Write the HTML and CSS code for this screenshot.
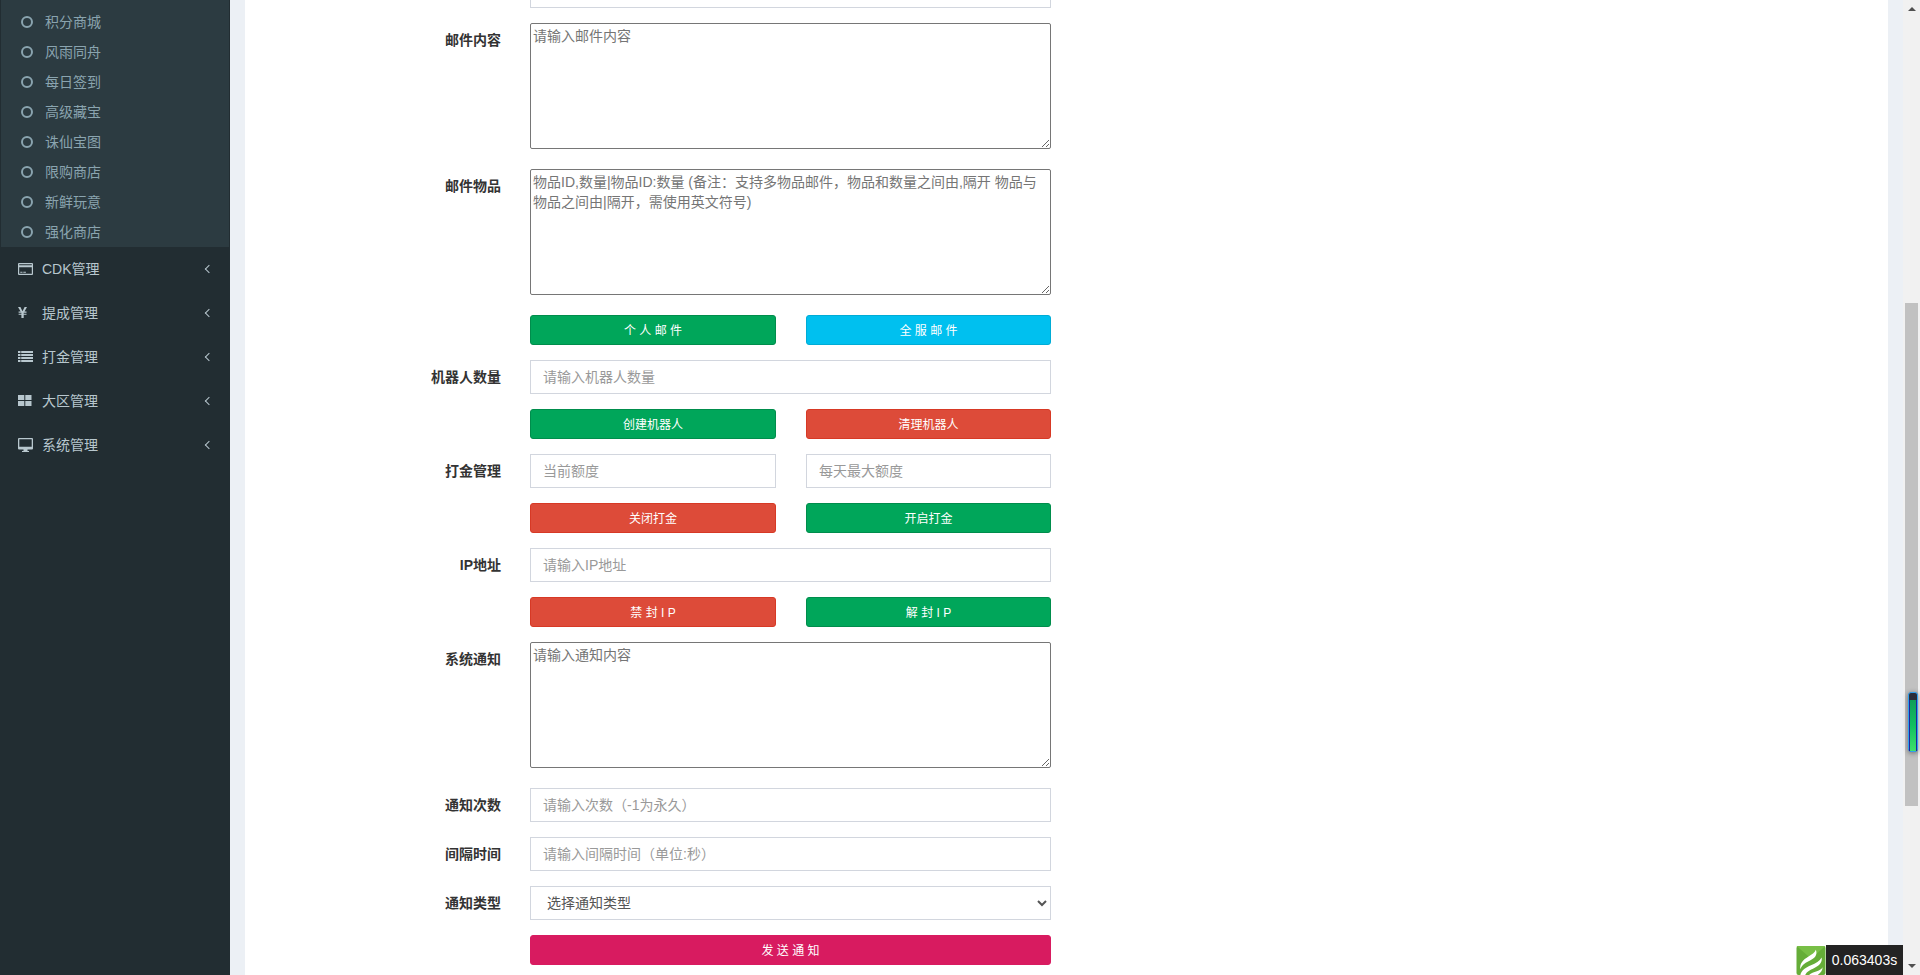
FILE: index.html
```html
<!DOCTYPE html>
<html lang="zh-CN">
<head>
    <meta charset="UTF-8">
    <title>后台管理</title>
    <link rel="stylesheet" href="styles.css">
</head>
<body>
    <div class="wrapper">
        <aside class="sidebar">
            <ul class="treeview-menu">
                <li><i class="circle-o"></i>积分商城</li>
                <li><i class="circle-o"></i>风雨同舟</li>
                <li><i class="circle-o"></i>每日签到</li>
                <li><i class="circle-o"></i>高级藏宝</li>
                <li><i class="circle-o"></i>诛仙宝图</li>
                <li><i class="circle-o"></i>限购商店</li>
                <li><i class="circle-o"></i>新鲜玩意</li>
                <li><i class="circle-o"></i>强化商店</li>
            </ul>
            <ul class="sidebar-menu">
                <li>
                    <svg class="menu-icon" viewBox="0 0 16 16"><path fill="currentColor" fill-rule="evenodd" d="M1 2h13a1 1 0 0 1 1 1v10a1 1 0 0 1-1 1H1a1 1 0 0 1-1-1V3a1 1 0 0 1 1-1zM1.200 3.200v1h12.600v-1zM1.200 6.200v6.600h12.600V6.200zM2.300 10.800h2.200v1H2.300zM5.300 10.800h2.600v1H5.300z"/></svg>
                    <span>CDK管理</span><i class="chevron"></i>
                </li>
                <li>
                    <svg class="menu-icon" viewBox="0 0 16 16"><path fill="currentColor" d="M0 2h2.400l2.100 4.200L6.600 2H9L6.500 6.600h2v1.100H5.700v1h2.800v1.100H5.700V13H3.400v-3.200H.6V8.700h2.800v-1H.6V6.600h2L0 2z"/></svg>
                    <span>提成管理</span><i class="chevron"></i>
                </li>
                <li>
                    <svg class="menu-icon" viewBox="0 0 16 16"><path fill="currentColor" d="M0 2h2.500v2H0zM3.200 2H15v2H3.200zM0 5h2.500v2H0zM3.200 5H15v2H3.200zM0 8h2.500v2H0zM3.200 8H15v2H3.200zM0 11h2.500v2H0zM3.200 11H15v2H3.200z"/></svg>
                    <span>打金管理</span><i class="chevron"></i>
                </li>
                <li>
                    <svg class="menu-icon" viewBox="0 0 16 16"><path fill="currentColor" d="M0 2h6.300v5H0zM7.300 2h6.200v5H7.300zM0 8h6.300v5H0zM7.300 8h6.200v5H7.300z"/></svg>
                    <span>大区管理</span><i class="chevron"></i>
                </li>
                <li>
                    <svg class="menu-icon" viewBox="0 0 16 16"><path fill="currentColor" fill-rule="evenodd" d="M1 1h13a1 1 0 0 1 1 1v9.500a1 1 0 0 1-1 1H9.500V14H11v1H4v-1h1.500v-1.500H1a1 1 0 0 1-1-1V2a1 1 0 0 1 1-1zM1.300 2.300v7.500h12.400V2.300z"/></svg>
                    <span>系统管理</span><i class="chevron"></i>
                </li>
            </ul>
        </aside>

        <main class="content">
            <form class="box">
                <div class="form-group">
                    <label></label>
                    <input type="text">
                </div>
                <div class="form-group area-group">
                    <label>邮件内容</label>
                    <textarea placeholder="请输入邮件内容"></textarea>
                </div>
                <div class="form-group area-group">
                    <label>邮件物品</label>
                    <textarea placeholder="物品ID,数量|物品ID:数量 (备注：支持多物品邮件，物品和数量之间由,隔开 物品与物品之间由|隔开，需使用英文符号)"></textarea>
                </div>
                <div class="form-group btn-group">
                    <label></label>
                    <div class="two-col">
                        <button type="button" class="btn btn-success">个 人 邮 件</button>
                        <button type="button" class="btn btn-info">全 服 邮 件</button>
                    </div>
                </div>
                <div class="form-group">
                    <label>机器人数量</label>
                    <input type="text" placeholder="请输入机器人数量">
                </div>
                <div class="form-group btn-group">
                    <label></label>
                    <div class="two-col">
                        <button type="button" class="btn btn-success">创建机器人</button>
                        <button type="button" class="btn btn-danger">清理机器人</button>
                    </div>
                </div>
                <div class="form-group">
                    <label>打金管理</label>
                    <div class="two-col">
                        <input type="text" placeholder="当前额度">
                        <input type="text" placeholder="每天最大额度">
                    </div>
                </div>
                <div class="form-group btn-group">
                    <label></label>
                    <div class="two-col">
                        <button type="button" class="btn btn-danger">关闭打金</button>
                        <button type="button" class="btn btn-success">开启打金</button>
                    </div>
                </div>
                <div class="form-group">
                    <label>IP地址</label>
                    <input type="text" placeholder="请输入IP地址">
                </div>
                <div class="form-group btn-group">
                    <label></label>
                    <div class="two-col">
                        <button type="button" class="btn btn-danger">禁 封 I P</button>
                        <button type="button" class="btn btn-success">解 封 I P</button>
                    </div>
                </div>
                <div class="form-group area-group">
                    <label>系统通知</label>
                    <textarea placeholder="请输入通知内容"></textarea>
                </div>
                <div class="form-group">
                    <label>通知次数</label>
                    <input type="text" placeholder="请输入次数（-1为永久）">
                </div>
                <div class="form-group">
                    <label>间隔时间</label>
                    <input type="text" placeholder="请输入间隔时间（单位:秒）">
                </div>
                <div class="form-group">
                    <label>通知类型</label>
                    <select>
                        <option>选择通知类型</option>
                    </select>
                </div>
                <div class="form-group btn-group">
                    <label></label>
                    <button type="button" class="btn btn-pink">发 送 通 知</button>
                </div>
            </form>
        </main>

        <div class="scrollbar">
            <div class="arrow arrow-up"></div>
            <div class="thumb"></div>
            <div class="arrow arrow-down"></div>
        </div>
    </div>

    <div class="scroll-widget"><div class="scroll-widget-bar"></div></div>

    <div class="trace">
        <svg class="trace-logo" viewBox="0 0 30 30">
            <rect width="30" height="30" rx="2" fill="#65ad38"/>
            <path fill="#78bf46" d="M0 0h30L15 13z"/>
            <path fill="#fff" d="M20 4c2 5-1 9-6 11-4 2-8 4-10 9-1-6 3-10 8-13 4-2 7-4 8-7z"/>
            <path fill="#fff" d="M26 12c1 5-3 9-8 11-4 2-7 3-9 7H4c1-5 6-8 11-10 5-2 9-4 11-8z"/>
            <path fill="#fff" d="M27 22c0 3-2 6-5 8h-9c2-2 5-3 8-4 3-1 5-2 6-4z"/>
        </svg>
        <div class="trace-time">0.063403s</div>
    </div>
</body>
</html>
```

FILE: styles.css
```css
* {
    box-sizing: border-box;
    margin: 0;
    padding: 0;
}

html, body {
    height: 975px;
    overflow: hidden;
}

body {
    font-family: "Liberation Sans", "Noto Sans CJK SC", sans-serif;
    font-size: 14px;
    color: #333333;
    background-color: #ecf0f5;
}

ul {
    list-style: none;
}

.wrapper {
    display: flex;
    height: 975px;
}

/* sidebar */
.sidebar {
    width: 230px;
    flex-shrink: 0;
    background-color: #222d32;
}

.treeview-menu {
    margin: 0 1px;
    padding: 7px 0 0;
    background-color: #2c3b41;
    color: #8aa4af;
}

.treeview-menu li {
    display: flex;
    align-items: center;
    height: 30px;
    padding: 0 0 2px 20px;
}

.circle-o {
    width: 12px;
    height: 12px;
    margin: 2px 12px 0 0;
    border: 2px solid #8aa4af;
    border-radius: 50%;
}

.sidebar-menu {
    color: #b8c7ce;
}

.sidebar-menu li {
    display: flex;
    align-items: center;
    height: 44px;
    padding: 0 17px 0 18px;
}

.menu-icon {
    width: 16px;
    height: 16px;
    margin-right: 8px;
    flex-shrink: 0;
}

.sidebar-menu span {
    flex: 1;
    margin-top: -2px;
}

.chevron {
    width: 6px;
    height: 6px;
    margin-right: 1px;
    border-left: 1.500px solid #b8c7ce;
    border-bottom: 1.500px solid #b8c7ce;
    transform: rotate(45deg);
}

/* main */
.content {
    flex: 1;
    padding: 0 15px;
    overflow: hidden;
}

.box {
    height: 975px;
    overflow: hidden;
    background-color: #ffffff;
}

.form-group {
    display: grid;
    grid-template-columns: 256px 521px;
    column-gap: 29px;
    margin-bottom: 15px;
}

.form-group:first-child {
    margin-top: -26px;
}

.form-group label {
    padding-top: 7px;
    font-weight: bold;
    text-align: right;
    line-height: 20px;
}

.area-group {
    margin-bottom: 20px;
}

.two-col {
    display: grid;
    grid-template-columns: 246px 245px;
    column-gap: 30px;
}

input, select {
    width: 100%;
    height: 34px;
    padding: 6px 12px;
    border: 1px solid #d2d6de;
    background-color: #ffffff;
    color: #555555;
    font: inherit;
    outline: none;
}

input::placeholder {
    color: #999999;
}

textarea {
    display: block;
    width: 100%;
    height: 126px;
    padding: 2px;
    border: 1px solid #767676;
    border-radius: 2px;
    font: inherit;
    line-height: 20px;
    outline: none;
}

textarea::placeholder {
    color: #757575;
}

.btn {
    display: block;
    width: 100%;
    height: 30px;
    padding-bottom: 2px;
    border: 1px solid transparent;
    border-radius: 3px;
    color: #ffffff;
    font: inherit;
    font-size: 12px;
    cursor: pointer;
}

.btn-success {
    background-color: #00a65a;
    border-color: #008d4c;
}

.btn-info {
    background-color: #00c0ef;
    border-color: #00acd6;
}

.btn-danger {
    background-color: #dd4b39;
    border-color: #d73925;
}

.btn-pink {
    background-color: #d81b60;
    border-color: #d81b60;
}

/* page scrollbar */
.scrollbar {
    width: 17px;
    flex-shrink: 0;
    display: flex;
    flex-direction: column;
    align-items: center;
    background-color: #f1f1f1;
}

.arrow {
    width: 0;
    height: 0;
    border-left: 4px solid transparent;
    border-right: 4px solid transparent;
}

.arrow-up {
    margin-top: 7px;
    border-bottom: 4px solid #505050;
}

.arrow-down {
    margin-top: 158px;
    border-top: 4px solid #505050;
}

.thumb {
    width: 13px;
    height: 503px;
    margin-top: 292px;
    background-color: #c1c1c1;
}

.scroll-widget {
    position: absolute;
    left: 1908px;
    top: 692px;
    width: 10px;
    height: 60px;
    padding-top: 7px;
    border: 1px solid #2f9ff0;
    border-radius: 3px;
    background-color: #2a2d3a;
    box-shadow: 0 1px 5px rgba(0, 0, 0, 0.45);
}

.scroll-widget-bar {
    height: 100%;
    border: solid #23239a;
    border-width: 0 1px;
    background: linear-gradient(#0f9d58, #12c060 50%, #3ee06a);
}

.trace {
    position: absolute;
    left: 1796px;
    top: 945px;
    display: flex;
    align-items: flex-end;
    height: 30px;
}

.trace-logo {
    width: 30px;
    height: 29px;
}

.trace-time {
    width: 77px;
    height: 30px;
    background-color: #232323;
    color: #ffffff;
    font-size: 14px;
    line-height: 30px;
    text-align: center;
}
```
